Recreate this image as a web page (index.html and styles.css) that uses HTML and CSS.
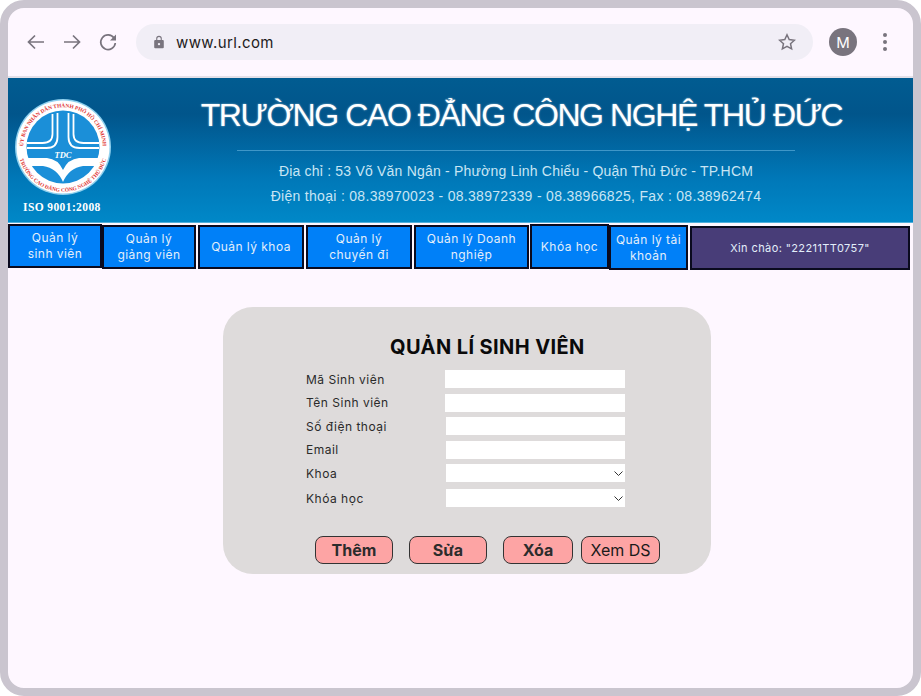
FILE: index.html
```html
<!DOCTYPE html>
<html lang="en">
<head>
<meta charset="UTF-8" />
<title>Quản lí sinh viên</title>
<link rel="stylesheet" href="styles.css">
</head>
<body>
<div class="frame">

  <!-- BROWSER BAR -->
  <div class="toolbar">
    <svg class="tool-icon" width="20" height="20" viewBox="0 0 20 20"><path d="M18 10H2.500M9 3.500L2.500 10 9 16.500" /></svg>
    <svg class="tool-icon" width="20" height="20" viewBox="0 0 20 20"><path d="M2 10h15.500M11 3.500l6.500 6.500-6.500 6.500" /></svg>
    <svg class="tool-icon" width="20" height="20" viewBox="0 0 20 20"><path d="M16 6a7.300 7.300 0 1 0 1.300 5" /><path class="solid" d="M18 2.500v6h-6z" /></svg>
    <div class="urlbar">
      <svg class="lock" width="12" height="14" viewBox="0 0 12 14"><path d="M3.200 5V3.600a2.800 2.800 0 0 1 5.600 0V5h1a1 1 0 0 1 1 1v6.200a1 1 0 0 1-1 1H2.200a1 1 0 0 1-1-1V6a1 1 0 0 1 1-1zM4.300 5h3.400V3.600a1.700 1.700 0 0 0-3.400 0z" /><circle cx="6" cy="9.100" r="1.200" fill="#f1eef6" /></svg>
      <span class="url">www.url.com</span>
      <svg class="star" width="18" height="18" viewBox="0 0 18 18"><path d="M9 1.800l2.200 4.800 5.200.6-3.900 3.500 1.100 5.200L9 13.300l-4.600 2.600 1.100-5.200-3.900-3.500 5.200-.6z" /></svg>
    </div>
    <div class="avatar">M</div>
    <div class="dots"><i></i><i></i><i></i></div>
  </div>

  <!-- BANNER -->
  <header class="banner">
    <div class="brand">
      <svg class="logo" width="96" height="96" viewBox="0 0 96 96">
        <defs>
          <path id="arc-top" d="M8.500 52A39.700 39.700 0 1 1 87.500 52" />
          <path id="arc-bottom" d="M3.200 52A45 45 0 0 0 92.800 52" />
        </defs>
        <circle cx="48" cy="48" r="48" fill="#8fd0ee" />
        <circle cx="48" cy="48" r="46.500" fill="#fff" />
        <circle cx="48" cy="48" r="36.500" fill="#1b8fd8" />
        <text class="ring-text"><textPath href="#arc-top" startOffset="50%" text-anchor="middle">ỦY BAN NHÂN DÂN THÀNH PHỐ HỒ CHÍ MINH</textPath></text>
        <text class="ring-text"><textPath href="#arc-bottom" startOffset="50%" text-anchor="middle">TRƯỜNG CAO ĐẲNG CÔNG NGHỆ THỦ ĐỨC</textPath></text>
        <path class="mark" d="M37.500 15v20q0 9-10 9H12M42.500 14v24q0 11-11 11H12M53.500 14v24q0 11 11 11H84M58.500 15v20q0 9 10 9H84" />
        <path class="band" d="M12 59H32Q43 60 48 71Q53 60 64 59H84L81 67H68Q54 69 48 83Q42 69 28 67H15Z" />
        <text class="tdc" x="48" y="59" text-anchor="middle">TDC</text>
      </svg>
      <div class="iso">ISO 9001:2008</div>
    </div>
    <div class="school">
      <h1 class="school-name">TRƯỜNG CAO ĐẲNG CÔNG NGHỆ THỦ ĐỨC</h1>
      <div class="school-line"></div>
      <p class="school-info">Địa chỉ : 53 Võ Văn Ngân - Phường Linh Chiểu - Quận Thủ Đức - TP.HCM</p>
      <p class="school-info phone">Điện thoại : 08.38970023 - 08.38972339 - 08.38966825, Fax : 08.38962474</p>
    </div>
  </header>

  <!-- MENU -->
  <nav class="menu">
    <a class="menu-item w94">Quản lý<br>sinh viên</a>
    <a class="menu-item w94 second">Quản lý<br>giảng viên</a>
    <a class="menu-item w106 second gap2">Quản lý khoa</a>
    <a class="menu-item w106 second gap2">Quản lý<br>chuyến đi</a>
    <a class="menu-item w115 second gap2">Quản lý Doanh<br>nghiệp</a>
    <a class="menu-item w79 tall gap1">Khóa học</a>
    <a class="menu-item w79 second tall">Quản lý tài<br>khoản</a>
    <div class="menu-item hello">Xin chào: "22211TT0757"</div>
  </nav>

  <!-- FORM -->
  <main class="card">
    <h2 class="card-title">QUẢN LÍ SINH VIÊN</h2>
    <form class="fields">
      <label class="field"><span>Mã Sinh viên</span><input type="text" class="first-col"></label>
      <label class="field"><span>Tên Sinh viên</span><input type="text" class="first-col"></label>
      <label class="field"><span>Số điện thoại</span><input type="text"></label>
      <label class="field"><span>Email</span><input type="text"></label>
      <label class="field"><span>Khoa</span><select><option></option></select></label>
      <label class="field wide-gap"><span>Khóa học</span><select><option></option></select></label>
    </form>
    <div class="actions">
      <button class="btn w78">Thêm</button>
      <button class="btn w78 ml16">Sửa</button>
      <button class="btn w70 ml16">Xóa</button>
      <button class="btn plain">Xem DS</button>
    </div>
  </main>

</div>
</body>
</html>
```

FILE: styles.css
```css
* {
  box-sizing: border-box;
}
body {
  margin: 0;
  background: #fff;
  font-family: Inter, 'Liberation Sans', sans-serif;
}

.frame {
  width: 921px;
  height: 696px;
  border: 8px solid #cac5cf;
  border-radius: 24px;
  background: #fef7ff;
  overflow: hidden;
}

/* Browser bar */
.toolbar {
  height: 70px;
  display: flex;
  align-items: center;
  padding-left: 18px;
  border-bottom: 2px solid #e3e0e8;
}
.tool-icon {
  margin-right: 16px;
  fill: none;
  stroke: #79747e;
  stroke-width: 1.700;
}
.tool-icon:nth-child(3) {
  margin-right: 18px;
}
.tool-icon .solid {
  fill: #79747e;
  stroke: none;
}
.urlbar {
  width: 677px;
  height: 36px;
  border-radius: 18px;
  background: #f1eef6;
  display: flex;
  align-items: center;
  padding: 0 17px;
}
.lock {
  fill: #79747e;
}
.url {
  margin-left: 11px;
  font-size: 15px;
  letter-spacing: 0.4px;
  color: #1d1b20;
}
.star {
  margin-left: auto;
  fill: none;
  stroke: #79747e;
  stroke-width: 1.500;
}
.avatar {
  width: 28px;
  height: 28px;
  margin-left: 16px;
  border-radius: 50%;
  background: #79747e;
  color: #fff;
  font-size: 15px;
  display: flex;
  align-items: center;
  justify-content: center;
}
.dots {
  margin-left: 26px;
  display: flex;
  flex-direction: column;
  gap: 3px;
}
.dots i {
  width: 4px;
  height: 4px;
  border-radius: 50%;
  background: #79747e;
}

/* Banner */
.banner {
  height: 145px;
  display: flex;
  background: linear-gradient(180deg, #015c91 0%, #01558b 25%, #0078b8 70%, #0088c8 100%);
  border-bottom: 1px solid #4fb0dc;
}
.brand {
  width: 118px;
  padding: 21px 0 0 7px;
}
.logo {
  display: block;
}
.ring-text {
  font-family: 'Liberation Serif', serif;
  font-weight: 700;
  font-size: 5.400px;
  fill: #e0322f;
}
.mark {
  fill: none;
  stroke: #fff;
  stroke-width: 1.800;
}
.band {
  fill: #fff;
}
.tdc {
  font-family: 'Liberation Serif', serif;
  font-style: italic;
  font-weight: 700;
  font-size: 8.500px;
  fill: #fff;
}
.iso {
  margin: 6px 0 0 8px;
  font-family: 'Liberation Serif', serif;
  font-weight: 700;
  font-size: 11.500px;
  letter-spacing: 0.4px;
  color: #fff;
  white-space: nowrap;
}
.school {
  width: 780px;
  padding-top: 17px;
  display: flex;
  flex-direction: column;
  align-items: center;
  color: #c8e5f4;
}
.school-name {
  margin: 0 0 0 11px;
  font-family: 'Liberation Sans', sans-serif;
  font-weight: 400;
  font-size: 32px;
  line-height: 40px;
  letter-spacing: -1.400px;
  color: #fff;
  white-space: nowrap;
  text-shadow: 0 0 2px rgba(255,255,255,0.6);
}
.school-line {
  width: 558px;
  height: 1px;
  margin-top: 15px;
  background: #3f97c8;
}
.school-info {
  margin: 12px 0 0 0;
  font-family: 'Liberation Sans', sans-serif;
  font-size: 14px;
  line-height: 17px;
  letter-spacing: 0.2px;
  white-space: nowrap;
}
.school-info.phone {
  margin-top: 8px;
  letter-spacing: 0.3px;
}

/* Menu */
.menu {
  display: flex;
  align-items: flex-start;
  padding-top: 1px;
}
.menu-item {
  height: 44px;
  display: flex;
  align-items: center;
  justify-content: center;
  text-align: center;
  background: #0080f8;
  border: 2px solid #0a0a1e;
  color: #e3eefa;
  font-size: 12px;
  line-height: 16px;
  letter-spacing: 0.45px;
}
.w94 { width: 94px; }
.w106 { width: 106px; }
.w115 { width: 115px; }
.w79 { width: 79px; }
.gap1 { margin-left: 1px; }
.gap2 { margin-left: 2px; }
.second { margin-top: 1px; }
.tall { height: 45px; }
.hello {
  width: 220px;
  height: 44px;
  margin: 2px 0 0 2px;
  background: #483d78;
  font-size: 11px;
  letter-spacing: 0.4px;
}

/* Form card */
.card {
  width: 488px;
  height: 267px;
  margin: 37px 0 0 215px;
  padding: 27px 0 0 83px;
  border-radius: 30px;
  background: #dedbdb;
}
.card-title {
  margin: 0 0 0 84px;
  font-size: 20px;
  line-height: 26px;
  letter-spacing: 0.4px;
  font-weight: 700;
  color: #0a0a0a;
  white-space: nowrap;
}
.fields {
  margin-top: 10px;
  display: flex;
  flex-direction: column;
  gap: 5.500px;
}
.field {
  display: flex;
  align-items: center;
  height: 18px;
  font-size: 12px;
  letter-spacing: 0.5px;
  color: #2a2a2a;
}
.field span {
  width: 140px;
}
.field input,
.field select {
  width: 179px;
  height: 18px;
  border: none;
  border-radius: 0;
  padding: 0;
  background-color: #fff;
  outline: none;
}
.field select {
  appearance: none;
  background-image: url("data:image/svg+xml,%3Csvg xmlns='http://www.w3.org/2000/svg' width='9' height='5'%3E%3Cpath d='M.5.5l4 4 4-4' fill='none' stroke='%23333' stroke-width='1'/%3E%3C/svg%3E");
  background-repeat: no-repeat;
  background-position: right 2px center;
}
.field input.first-col {
  width: 180px;
  margin-left: -1px;
}
.wide-gap {
  margin-top: 1.500px;
}
.actions {
  margin: 29px 0 0 9px;
  display: flex;
}
.btn {
  height: 28px;
  padding: 0;
  border: 1px solid #333;
  border-radius: 8px;
  background: #fda4a4;
  color: #2c2c2c;
  font-family: Inter, 'Liberation Sans', sans-serif;
  font-size: 16px;
  font-weight: 700;
}
.w78 { width: 78px; }
.w70 { width: 70px; }
.ml16 { margin-left: 16px; }
.btn.plain {
  width: 79px;
  margin-left: 8px;
  font-weight: 400;
  color: #1a1a1a;
}
```
